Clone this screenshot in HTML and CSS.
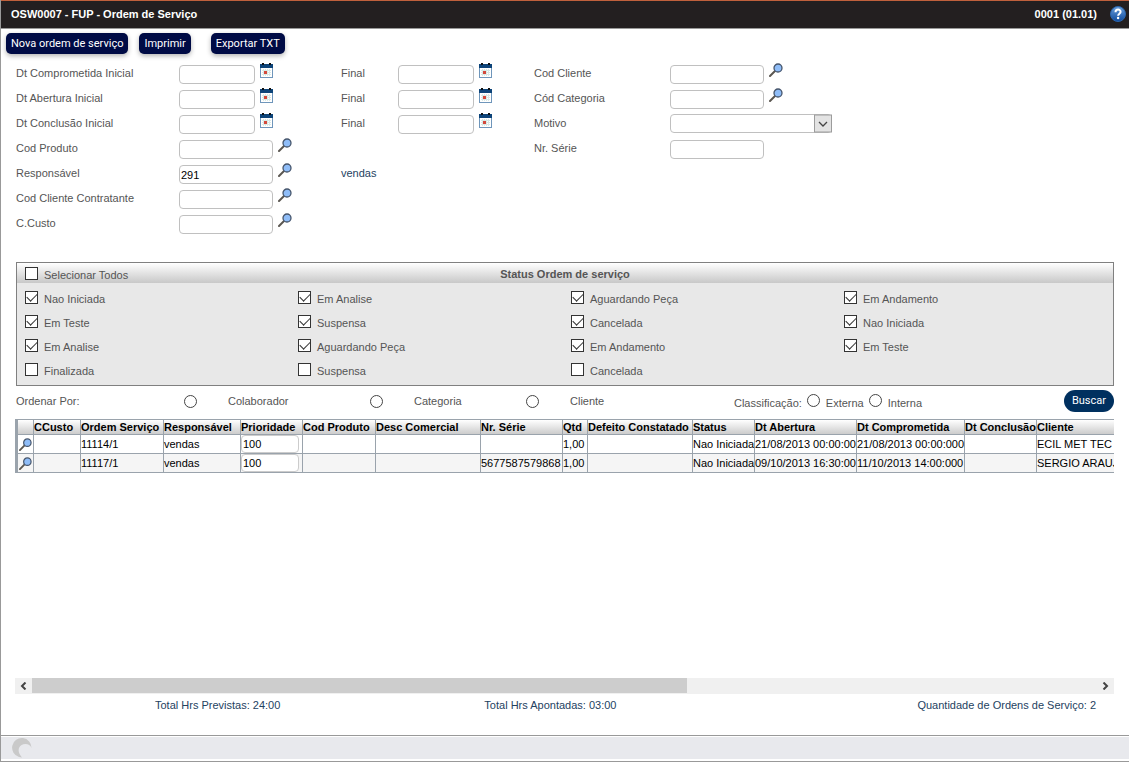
FILE: index.html
```html
<!DOCTYPE html>
<html lang="pt-BR">
<head>
<meta charset="utf-8">
<title>OSW0007 - FUP - Ordem de Serviço</title>
<link rel="stylesheet" href="styles.css">
</head>
<body>
<svg class="defs" aria-hidden="true">
  <symbol id="cal" viewBox="0 0 13 15">
    <rect x="0.5" y="2.5" width="12" height="12" fill="#fff" stroke="#6f96bb"/>
    <rect x="0" y="1" width="13" height="4" fill="#0d4479"/>
    <rect x="2" y="0" width="2" height="2" fill="#111"/><rect x="9" y="0" width="2" height="2" fill="#111"/>
    <path d="M2 7.500h9M2 9.500h9M2 11.500h9M3.500 6v7M5.500 6v7M7.500 6v7M9.500 6v7" stroke="#d9e9e6" fill="none"/>
    <rect x="4" y="8" width="3" height="3" fill="#d3493b"/>
  </symbol>
  <symbol id="mag" viewBox="0 0 14 14">
    <path d="M1 13L6 8" stroke="#5b5751" stroke-width="2" stroke-linecap="round"/>
    <circle cx="9" cy="5" r="4" fill="#8fbdf8" stroke="#46556b" stroke-width="1.300"/>
  </symbol>
</svg>
<header class="topbar">
  <h1>OSW0007 - FUP - Ordem de Serviço</h1>
  <span class="version">0001 (01.01)</span>
  <button class="icon-btn" aria-label="Ajuda"><svg width="16" height="16" viewBox="0 0 16 16"><defs><linearGradient id="hg" x2="0" y2="1"><stop offset="0" stop-color="#6a9fdc"/><stop offset="1" stop-color="#0f4a9c"/></linearGradient></defs><circle cx="8" cy="8" r="7.500" fill="url(#hg)" stroke="#2b65ad"/><path d="M5.500 6.200C5.500 2.800 10.700 2.800 10.600 5.900C10.500 7.700 8.100 7.700 8.100 9.800" fill="none" stroke="#fff" stroke-width="2"/><circle cx="8.100" cy="12" r="1.200" fill="#fff"/></svg></button>
</header>
<nav class="toolbar">
  <button class="action">Nova ordem de serviço</button>
  <button class="action">Imprimir</button>
  <button class="action spaced">Exportar TXT</button>
</nav>
<main>
  <form class="filters">
    <div class="group main-group">
      <label for="f1">Dt Comprometida Inicial</label><div class="field"><input type="text" class="date" id="f1"><button type="button" class="icon-btn" aria-label="Calendário"><svg class="cal"><use href="#cal"/></svg></button></div>
      <label for="f2">Dt Abertura Inicial</label><div class="field"><input type="text" class="date" id="f2"><button type="button" class="icon-btn" aria-label="Calendário"><svg class="cal"><use href="#cal"/></svg></button></div>
      <label for="f3">Dt Conclusão Inicial</label><div class="field"><input type="text" class="date" id="f3"><button type="button" class="icon-btn" aria-label="Calendário"><svg class="cal"><use href="#cal"/></svg></button></div>
      <label for="f4">Cod Produto</label><div class="field"><input type="text" id="f4"><button type="button" class="icon-btn" aria-label="Pesquisar"><svg class="mag"><use href="#mag"/></svg></button></div>
      <label for="f5">Responsável</label><div class="field"><input type="text" id="f5" value="291"><button type="button" class="icon-btn" aria-label="Pesquisar"><svg class="mag"><use href="#mag"/></svg></button></div>
      <label for="f6">Cod Cliente Contratante</label><div class="field"><input type="text" id="f6"><button type="button" class="icon-btn" aria-label="Pesquisar"><svg class="mag"><use href="#mag"/></svg></button></div>
      <label for="f7">C.Custo</label><div class="field"><input type="text" id="f7"><button type="button" class="icon-btn" aria-label="Pesquisar"><svg class="mag"><use href="#mag"/></svg></button></div>
    </div>
    <div class="group end-group">
      <label for="g1">Final</label><div class="field"><input type="text" class="date" id="g1"><button type="button" class="icon-btn" aria-label="Calendário"><svg class="cal"><use href="#cal"/></svg></button></div>
      <label for="g2">Final</label><div class="field"><input type="text" class="date" id="g2"><button type="button" class="icon-btn" aria-label="Calendário"><svg class="cal"><use href="#cal"/></svg></button></div>
      <label for="g3">Final</label><div class="field"><input type="text" class="date" id="g3"><button type="button" class="icon-btn" aria-label="Calendário"><svg class="cal"><use href="#cal"/></svg></button></div>
      <output class="owner" for="f5">vendas</output>
    </div>
    <div class="group side-group">
      <label for="h1">Cod Cliente</label><div class="field"><input type="text" id="h1"><button type="button" class="icon-btn" aria-label="Pesquisar"><svg class="mag"><use href="#mag"/></svg></button></div>
      <label for="h2">Cód Categoria</label><div class="field"><input type="text" id="h2"><button type="button" class="icon-btn" aria-label="Pesquisar"><svg class="mag"><use href="#mag"/></svg></button></div>
      <label for="h3">Motivo</label><div class="field"><span class="select-wrap"><select id="h3"><option></option></select><svg class="arrow" viewBox="0 0 18 18"><rect x="0.500" y="0.500" width="17" height="17" fill="#e3e3e3" stroke="#9c9c9c"/><path d="M5 7.500l4 4 4-4" fill="none" stroke="#444" stroke-width="1.300"/></svg></span></div>
      <label for="h4">Nr. Série</label><div class="field"><input type="text" id="h4"></div>
    </div>
  </form>
  <section class="status">
    <div class="status-head"><label class="check"><input type="checkbox">Selecionar Todos</label><h2>Status Ordem de serviço</h2></div>
    <div class="status-grid">
      <label class="check"><input type="checkbox" checked>Nao Iniciada</label>
      <label class="check"><input type="checkbox" checked>Em Analise</label>
      <label class="check"><input type="checkbox" checked>Aguardando Peça</label>
      <label class="check"><input type="checkbox" checked>Em Andamento</label>
      <label class="check"><input type="checkbox" checked>Em Teste</label>
      <label class="check"><input type="checkbox" checked>Suspensa</label>
      <label class="check"><input type="checkbox" checked>Cancelada</label>
      <label class="check"><input type="checkbox" checked>Nao Iniciada</label>
      <label class="check"><input type="checkbox" checked>Em Analise</label>
      <label class="check"><input type="checkbox" checked>Aguardando Peça</label>
      <label class="check"><input type="checkbox" checked>Em Andamento</label>
      <label class="check"><input type="checkbox" checked>Em Teste</label>
      <label class="check"><input type="checkbox">Finalizada</label>
      <label class="check"><input type="checkbox">Suspensa</label>
      <label class="check"><input type="checkbox">Cancelada</label>
    </div>
  </section>
  <div class="sort">
    <span class="sort-title">Ordenar Por:</span>
    <label class="order wide"><input type="radio" name="ord">Colaborador</label>
    <label class="order"><input type="radio" name="ord">Categoria</label>
    <label class="order"><input type="radio" name="ord">Cliente</label>
    <div class="class-group"><span>Classificação:</span><label><input type="radio" name="cls">Externa</label><label><input type="radio" name="cls">Interna</label></div>
    <button class="search">Buscar</button>
  </div>
  <div class="table-pane">
    <table>
      <colgroup><col class="c-icon"><col class="c-cc"><col class="c-os"><col class="c-resp"><col class="c-prio"><col class="c-prod"><col class="c-desc"><col class="c-serie"><col class="c-qtd"><col class="c-def"><col class="c-status"><col class="c-open"><col class="c-due"><col class="c-done"><col class="c-client"></colgroup>
      <thead><tr><th></th><th>CCusto</th><th>Ordem Serviço</th><th>Responsável</th><th>Prioridade</th><th>Cod Produto</th><th>Desc Comercial</th><th>Nr. Série</th><th>Qtd</th><th>Defeito Constatado</th><th>Status</th><th>Dt Abertura</th><th>Dt Comprometida</th><th>Dt Conclusão</th><th>Cliente</th></tr></thead>
      <tbody>
        <tr><td><button class="icon-btn" aria-label="Abrir 11114/1"><svg class="mag"><use href="#mag"/></svg></button></td><td></td><td>11114/1</td><td>vendas</td><td><input type="text" class="prio" value="100" aria-label="Prioridade"></td><td></td><td></td><td></td><td>1,00</td><td></td><td>Nao Iniciada</td><td>21/08/2013 00:00:00</td><td>21/08/2013 00:00:000</td><td></td><td>ECIL MET TEC</td></tr>
        <tr><td><button class="icon-btn" aria-label="Abrir 11117/1"><svg class="mag"><use href="#mag"/></svg></button></td><td></td><td>11117/1</td><td>vendas</td><td><input type="text" class="prio" value="100" aria-label="Prioridade"></td><td></td><td></td><td>5677587579868</td><td>1,00</td><td></td><td>Nao Iniciada</td><td>09/10/2013 16:30:00</td><td>11/10/2013 14:00:000</td><td></td><td>SERGIO ARAUJO</td></tr>
      </tbody>
    </table>
  </div>
  <div class="scrollbar">
    <button aria-label="Rolar para a esquerda"><svg width="7" height="8" viewBox="0 0 7 8"><path d="M5.500 0.500L2 4l3.500 3.500" fill="none" stroke="#444" stroke-width="2"/></svg></button>
    <div class="track"><div class="thumb"></div></div>
    <button aria-label="Rolar para a direita"><svg width="7" height="8" viewBox="0 0 7 8"><path d="M1.500 0.500L5 4 1.500 7.500" fill="none" stroke="#444" stroke-width="2"/></svg></button>
  </div>
  <div class="totals">
    <span>Total Hrs Previstas: 24:00</span>
    <span>Total Hrs Apontadas: 03:00</span>
    <span class="count">Quantidade de Ordens de Serviço: 2</span>
  </div>
</main>
<footer><div class="footer-bar"><svg width="20" height="20" viewBox="0 0 20 20"><path d="M7 19A9.700 9.700 0 1 1 19.500 10C18 4.500 9 4.500 7 10C6 13 7 16 10 19.500Z" fill="#c9c9c9"/></svg></div></footer>
</body>
</html>
```
FILE: styles.css
```css
* { box-sizing: border-box; }
body {
  margin: 0;
  min-height: 100vh;
  display: flex;
  flex-direction: column;
  border-left: 1px solid #999;
  background: #fff;
  color: #555;
  font: 11px/14px "Liberation Sans", Arial, sans-serif;
}
.defs { position: absolute; width: 0; height: 0; }
svg { display: block; }
h1, h2 { margin: 0; font-size: inherit; }
input, select, button { font: inherit; margin: 0; }
button { border: 0; padding: 0; cursor: pointer; }
.icon-btn { background: none; }
.cal { width: 13px; height: 15px; }
.mag { width: 14px; height: 14px; }

.topbar {
  height: 29px;
  display: flex;
  align-items: center;
  padding: 0 3px 2px 10px;
  background: #231f20;
  border-top: 1px solid #c0603c;
  border-bottom: 1px solid #999;
  color: #fff;
  font-weight: bold;
}
.version { margin-left: auto; margin-right: 13px; }

.toolbar { display: flex; gap: 11px; padding: 4px 5px 7px; }
.action {
  height: 21px;
  padding: 0 5px;
  border-radius: 5px;
  background: #000b45;
  box-shadow: 0 2px 5px rgba(0, 0, 0, 0.3);
  color: #fff;
  font-family: Roboto, sans-serif;
}
.spaced { margin-left: 9px; }

main { flex: 1; display: flex; flex-direction: column; padding: 0 15px; }
.filters { display: flex; height: 201px; }
.group { display: grid; grid-auto-rows: 25px; align-content: start; align-items: center; }
.group > label, .owner { padding-bottom: 2px; }
.main-group { grid-template-columns: 163px 162px; }
.end-group { grid-template-columns: 57px 136px; }
.side-group { grid-template-columns: 136px 170px; }
.field { display: flex; align-items: center; gap: 5px; height: 25px; }
.field .icon-btn { align-self: flex-start; padding-top: 2px; }
.field input, select {
  width: 94px;
  height: 19px;
  margin-top: 2px;
  padding: 0 1px;
  border: 1px solid #c0c0c0;
  border-radius: 4px;
  background: #fff;
  color: #000;
}
.field .date { width: 76px; }
.select-wrap { position: relative; display: block; width: 162px; }
select { appearance: none; width: 100%; margin: 0; display: block; }
.arrow { position: absolute; right: 0; top: 0; width: 18px; height: 19px; pointer-events: none; }
.owner { grid-row: 5; color: #24425f; }

.status { border: 1px solid #808080; background: #e8e8e8; }
.status-head {
  display: grid;
  grid-template-columns: 1fr auto 1fr;
  height: 20px;
  padding: 0 4px;
  align-items: center;
  background: linear-gradient(#fff, #c8c8c8);
}
.status-grid {
  display: grid;
  grid-template-columns: repeat(4, 1fr);
  grid-auto-rows: 24px;
  padding: 3px 0 3px 4px;
}
.check { display: flex; align-items: center; gap: 6px; line-height: 20px; padding: 2px 0 0 4px; }
.check input {
  appearance: none;
  width: 13px;
  height: 13px;
  margin-bottom: 4px;
  border: 1px solid #333;
  background: #fff;
}
.check input:checked::before {
  content: "";
  display: block;
  width: 9px;
  height: 5px;
  margin: 1px;
  border-left: 1px solid #333;
  border-bottom: 1px solid #333;
  transform: rotate(-45deg);
}

.sort { display: flex; align-items: center; height: 33px; padding-bottom: 3px; }
.sort-title { width: 168px; }
.sort label { display: flex; align-items: center; }
.sort input {
  appearance: none;
  width: 13px;
  height: 13px;
  border: 1px solid #444;
  border-radius: 50%;
  background: #fff;
}
.order { width: 156px; gap: 31px; }
.wide { width: 186px; }
.class-group { display: flex; gap: 5px; margin-left: auto; margin-right: 142px; padding-top: 3px; }
.class-group span { padding-top: 2px; }
.class-group label { gap: 6px; }
.class-group input { margin-bottom: 4px; }
.search {
  width: 50px;
  height: 22px;
  border-radius: 11px;
  background: #00305f;
  color: #fff;
  font: 11px/14px Roboto, sans-serif;
}

.table-pane { flex: 1; margin-left: -1px; overflow: hidden; }
table { table-layout: fixed; width: 1222px; border-collapse: separate; border-spacing: 0; color: #000; }
.c-icon { width: 19px; }
.c-cc { width: 47px; }
.c-os { width: 83px; }
.c-resp { width: 77px; }
.c-prio { width: 62px; }
.c-prod { width: 73px; }
.c-desc { width: 105px; }
.c-serie { width: 82px; }
.c-qtd { width: 25px; }
.c-def { width: 105px; }
.c-status { width: 62px; }
.c-open { width: 102px; }
.c-due { width: 108px; }
.c-done { width: 72px; }
.c-client { width: 200px; }
th, td {
  height: 19px;
  padding: 0;
  border-right: 1px solid #9aa3ac;
  border-bottom: 1px solid #9aa3ac;
  text-align: left;
  white-space: nowrap;
}
th { height: 16px; border-top: 1px solid #9aa3ac; background: linear-gradient(#fff, #ccc); }
th:first-child, td:first-child { border-left: 3px solid #9aa3ac; }
tbody tr:nth-child(even) td { background: #f5f5f5; }
td .icon-btn { display: block; padding-left: 1px; }
td .mag { width: 13px; height: 13px; }
.prio {
  display: block;
  width: 58px;
  height: 18px;
  padding: 0 1px;
  border: 1px solid #ccc;
  border-radius: 4px;
  background: #fff;
}

.scrollbar { display: flex; height: 16px; margin-left: -1px; background: #f0f0f0; }
.scrollbar button { width: 17px; display: grid; place-items: center; background: none; }
.track { flex: 1; }
.thumb { width: 61.5%; height: 15px; background: #cdcdcd; }
.totals { display: flex; height: 41px; padding: 4px 18px 0 139px; gap: 204px; color: #24425f; }
.count { margin-left: auto; }

footer { height: 27px; padding: 1px 0 2px; border-top: 1px solid #999; border-bottom: 1px solid #999; }
.footer-bar { height: 22px; padding: 1px 11px; background: #e8e9ed; }
```
